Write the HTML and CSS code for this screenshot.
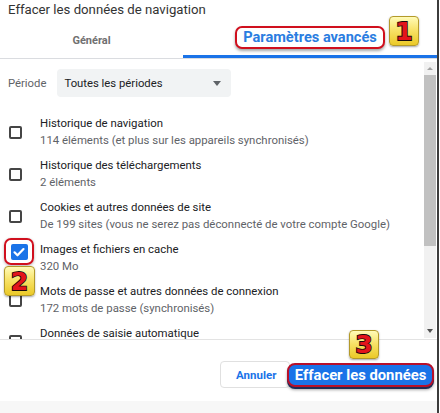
FILE: index.html
```html
<!DOCTYPE html>
<html lang="fr">
<head>
<meta charset="utf-8">
<title>Effacer les données de navigation</title>
<link rel="stylesheet" href="styles.css">
</head>
<body>
<div class="dialog">
  <h1 class="title">Effacer les données de navigation</h1>
  <div class="tabs">
    <div class="tab">Général</div>
    <div class="tab active"><span class="hl-tab">Paramètres avancés</span></div>
  </div>
  <div class="body">
    <div class="content">
      <div class="period">
        <span class="period-label">Période</span>
        <div class="select">
          <span>Toutes les périodes</span>
          <span class="caret"></span>
        </div>
      </div>
      <ul class="items">
        <li class="item">
          <span class="box"></span>
          <div class="texts"><div class="name">Historique de navigation</div><div class="sub">114 éléments (et plus sur les appareils synchronisés)</div></div>
        </li>
        <li class="item">
          <span class="box"></span>
          <div class="texts"><div class="name">Historique des téléchargements</div><div class="sub">2 éléments</div></div>
        </li>
        <li class="item">
          <span class="box"></span>
          <div class="texts"><div class="name">Cookies et autres données de site</div><div class="sub">De 199 sites (vous ne serez pas déconnecté de votre compte Google)</div></div>
        </li>
        <li class="item item-checked">
          <span class="hl-box"><span class="box checked"><svg viewBox="0 0 16 16" width="16" height="16"><path d="M3.5 8.3l3 3 6-6.2" fill="none" stroke="#fff" stroke-width="2.2" stroke-linecap="round" stroke-linejoin="round"/></svg></span></span>
          <div class="texts"><div class="name">Images et fichiers en cache</div><div class="sub">320 Mo</div></div>
        </li>
        <li class="item">
          <span class="box"></span>
          <div class="texts"><div class="name">Mots de passe et autres données de connexion</div><div class="sub">172 mots de passe (synchronisés)</div></div>
        </li>
        <li class="item item-last">
          <span class="box"></span>
          <div class="texts"><div class="name">Données de saisie automatique</div></div>
        </li>
      </ul>
    </div>
    <div class="scrollbar">
      <span class="arrow up"></span>
      <div class="track"><div class="thumb"></div></div>
      <span class="arrow down"></span>
    </div>
  </div>
  <div class="footer">
    <button class="btn cancel">Annuler</button>
    <button class="btn primary">Effacer les données</button>
  </div>
  <div class="bottom"></div>

  <span class="badge badge-1">1</span>
  <span class="badge badge-2">2</span>
  <span class="badge badge-3">3</span>
</div>
</body>
</html>
```

FILE: styles.css
```css
* { box-sizing: border-box; }
html, body { margin: 0; padding: 0; background: #fff; }
body { width: 440px; height: 413px; overflow: hidden; font-family: Roboto, "Liberation Sans", sans-serif; }

.dialog {
  position: relative;
  width: 439px;
  height: 413px;
  border-right: 2px solid #3c3c3c;
  display: flex;
  flex-direction: column;
  background: #fff;
}

.title {
  margin: 0;
  padding: 1px 8px 0;
  height: 19px;
  line-height: 18px;
  font-size: 13.2px;
  font-weight: 400;
  color: #333;
}

.tabs {
  display: grid;
  grid-template-columns: 183px 1fr;
  height: 40px;
  border-bottom: 1px solid #dadce0;
}
.tab {
  display: flex;
  align-items: center;
  justify-content: center;
  font-size: 11px;
  font-weight: 700;
  color: #707070;
  padding-top: 3px;
}
.tab.active {
  border-bottom: 3px solid #1a73e8;
  padding-top: 0;
  color: #1a73e8;
}
.hl-tab {
  font-size: 14.6px;
  line-height: 19px;
  padding: 0 6px;
  border: 2px solid #d0101e;
  border-radius: 7px;
  box-shadow: 0 2px 3px rgba(0,0,0,.35);
  background: #fff;
  color: #2a7de1;
}

.body {
  display: flex;
  height: 280px;
  overflow: hidden;
}
.content {
  flex: 1;
  overflow: hidden;
  padding-top: 10px;
}
.period {
  display: flex;
  align-items: center;
  padding-left: 8px;
  gap: 11px;
}
.period-label { font-size: 11.3px; color: #5f6368; }
.select {
  width: 174px;
  height: 28px;
  background: #f1f3f4;
  border-radius: 4px;
  display: flex;
  align-items: center;
  justify-content: space-between;
  padding: 0 10px 0 7px;
  font-size: 11.3px;
  color: #202124;
}
.caret {
  width: 0; height: 0;
  border-left: 4.5px solid transparent;
  border-right: 4.5px solid transparent;
  border-top: 5px solid #5f6368;
}

.items { list-style: none; margin: 14px 0 0; padding: 0; }
.item {
  display: flex;
  align-items: center;
  height: 42px;
  padding-left: 9px;
}
.box {
  flex: none;
  width: 13px;
  height: 13px;
  border: 2px solid #454545;
  border-radius: 2px;
  margin-right: 18px;
  margin-top: 1px;
}
.texts { line-height: 17px; font-size: 11.4px; white-space: nowrap; }
.name { color: #202124; }
.sub { color: #5f6368; }

.item-last { align-items: flex-start; }
.item-last .box { margin-top: 14px; }
.item-last .texts { padding-top: 4px; }

.item-checked { align-items: flex-start; padding-left: 4px; }
.item-checked .texts { padding-top: 4px; }
.hl-box {
  flex: none;
  width: 30px;
  height: 27px;
  border: 2px solid #d0101e;
  border-radius: 7px;
  display: flex;
  align-items: center;
  justify-content: center;
  margin-right: 6px;
  margin-top: 1px;
  box-shadow: 0 1px 3px rgba(0,0,0,.3);
}
.box.checked {
  width: 17px;
  height: 16px;
  margin: 0;
  border: none;
  background: #1a73e8;
  border-radius: 2px;
  display: flex;
  align-items: center;
  justify-content: center;
}

.scrollbar {
  flex: none;
  width: 12px;
  margin: 3px 1px 1px 0;
  background: #f1f1f1;
  display: flex;
  flex-direction: column;
  align-items: center;
}
.arrow { flex: none; width: 0; height: 0; margin: 5px 0; }
.arrow.up { border-left: 3px solid transparent; border-right: 3px solid transparent; border-bottom: 3px solid #a3a3a3; }
.arrow.down { border-left: 3.5px solid transparent; border-right: 3.5px solid transparent; border-top: 4px solid #505050; }
.track { flex: 1; width: 100%; }
.thumb { height: 171px; background: #c1c1c1; }

.footer {
  height: 62px;
  border-top: 1px solid #e3e3e3;
  display: flex;
  justify-content: flex-end;
  align-items: flex-start;
  padding: 21px 3px 0 0;
}
.btn { font-family: Roboto, "Liberation Sans", sans-serif; font-weight: 700; cursor: pointer; }
.cancel {
  height: 27px;
  padding: 0 14px 0 15px;
  width: 70px;
  background: #fff;
  color: #1a73e8;
  border: 1px solid #e0e0e0;
  border-radius: 4px;
  font-size: 11.5px;
  text-align: left;
}
.primary {
  position: relative;
  margin-left: -3px;
  margin-top: 2px;
  height: 24px;
  padding: 0 4px;
  width: 147px;
  background: #1a73e8;
  color: #fff;
  border: 2px solid #b8102a;
  border-radius: 8px;
  font-size: 14.8px;
  line-height: 19px;
  box-shadow: 0 2px 0 #1d2b55, 0 3px 3px rgba(0,0,0,.35);
}

.bottom {
  flex: 1;
  background: #f7f7f7;
}

.badge {
  position: absolute;
  width: 30px;
  height: 30px;
  display: flex;
  align-items: center;
  justify-content: center;
  background: linear-gradient(#fffbb8 0%, #f8e36a 45%, #ebc927 100%);
  border: 1px solid #b39a2a;
  border-radius: 4px;
  box-shadow: 0 1px 2px rgba(0,0,0,.35);
  font: 700 25px "DejaVu Sans", sans-serif;
  line-height: 1;
  color: #e3141b;
  -webkit-text-stroke: 1.8px #1a0a0a;
  paint-order: stroke fill;
}
.badge-1 { left: 389px; top: 16px; }
.badge-2 { left: 4px; top: 266px; width: 31px; }
.badge-3 { left: 349px; top: 330px; height: 29px; }
```
